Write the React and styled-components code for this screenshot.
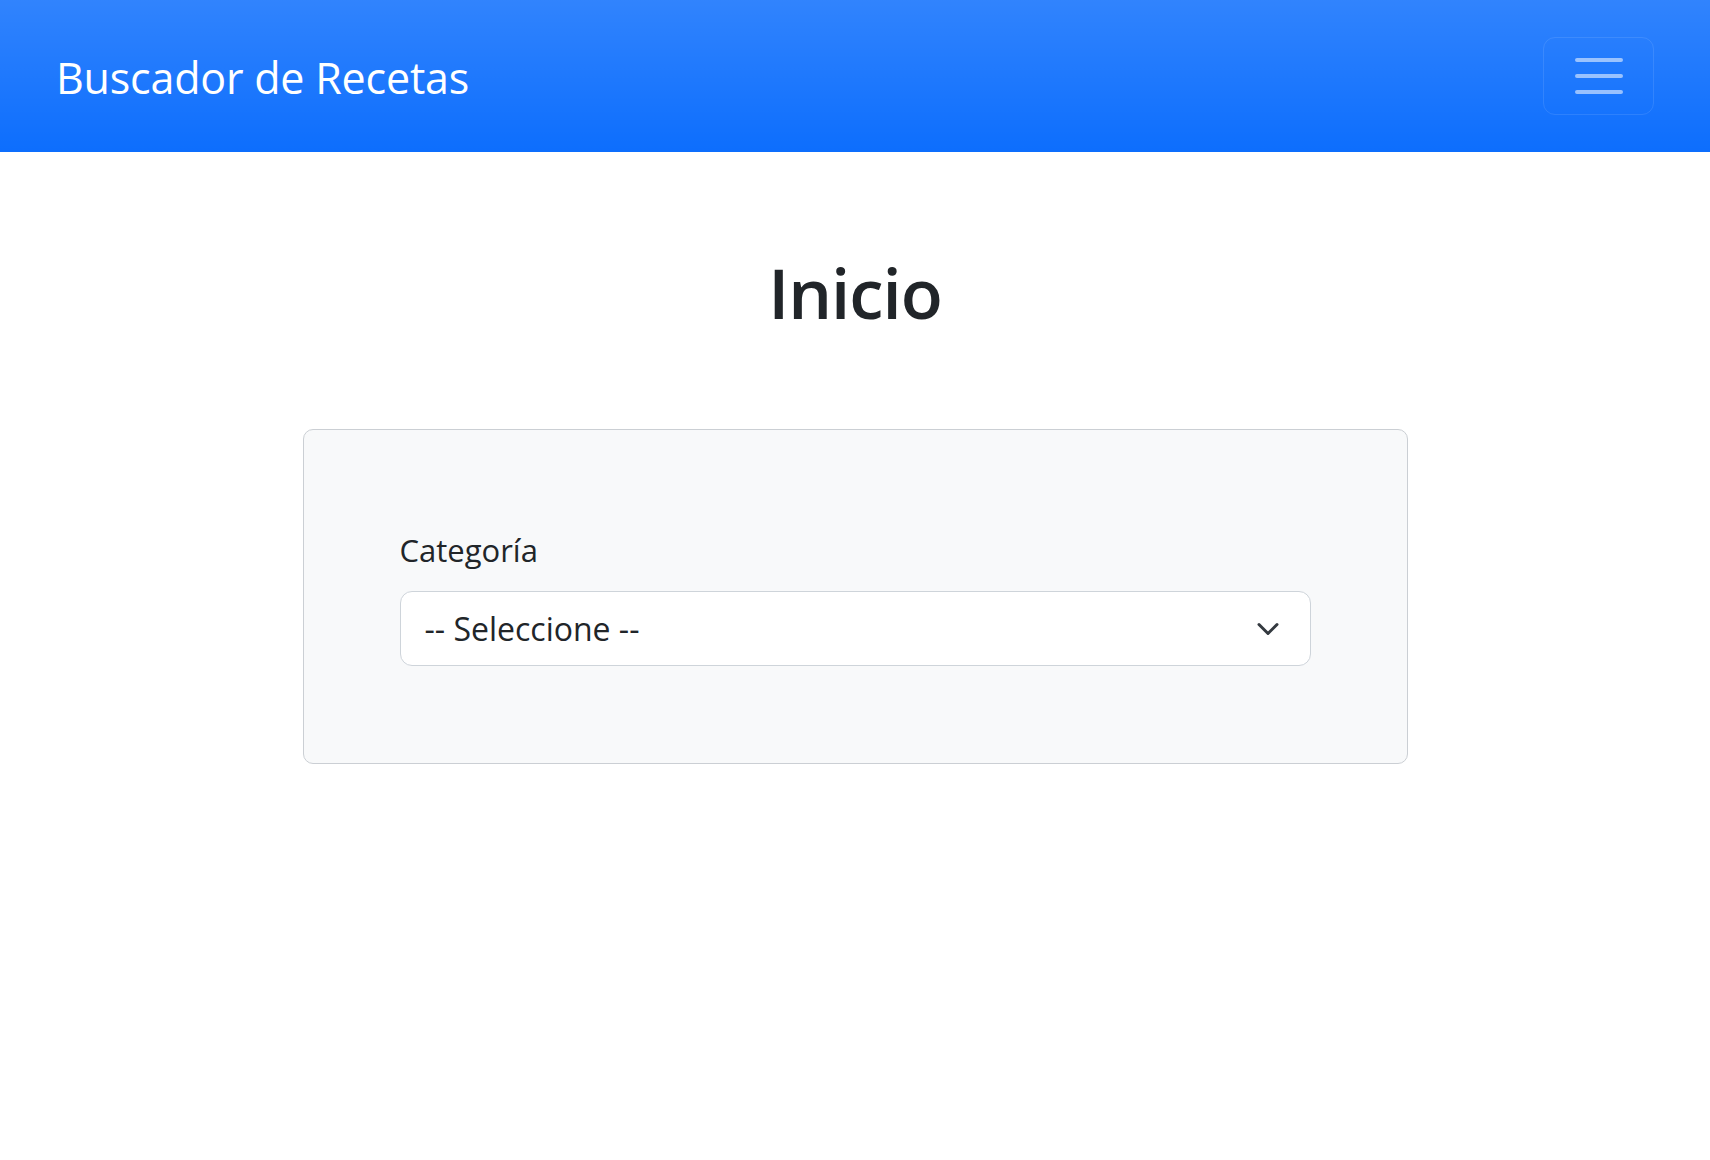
import React from 'react';
import styled, { createGlobalStyle } from 'styled-components';

const GlobalStyle = createGlobalStyle`
  body {
    margin: 0;
    background: #fff;
    color: #212529;
    font-family: "Open Sans", "Noto Sans", "Liberation Sans", sans-serif;
  }
  * { box-sizing: border-box; }
`;

// Navbar
const Navbar = styled.nav`
  height: 152px;
  padding: 0 56px;
  display: flex;
  align-items: center;
  justify-content: space-between;
  background-color: #0d6efd;
  background-image: linear-gradient(180deg, rgba(255, 255, 255, 0.15), rgba(255, 255, 255, 0));
`;

const Brand = styled.a`
  padding-top: 4px;
  color: #fff;
  font-size: 43px;
  line-height: 60px;
  text-decoration: none;
  letter-spacing: -0.2px;
`;

const Toggler = styled.button`
  width: 111px;
  height: 78px;
  padding: 8px 24px;
  display: flex;
  align-items: center;
  justify-content: center;
  background: transparent;
  border: 1px solid rgba(255, 255, 255, 0.1);
  border-radius: 12px;
  cursor: pointer;
`;

const TogglerIcon = () => (
  <svg width="60" height="60" viewBox="0 0 30 30">
    <path
      d="M4 7h22M4 15h22M4 23h22"
      stroke="rgba(255,255,255,0.55)"
      strokeWidth="2"
      strokeLinecap="round"
      strokeMiterlimit="10"
    />
  </svg>
);

// Main content
const Main = styled.main`
  display: flex;
  flex-direction: column;
  align-items: center;
  padding-top: 98px;
`;

const Heading = styled.h1`
  margin: 0 0 95px;
  font-size: 69px;
  font-weight: 600;
  line-height: 84px;
  letter-spacing: -1px;
`;

const Card = styled.div`
  width: 1105px;
  padding: 96px 96px 97px;
  background: #f8f9fa;
  border: 1px solid #cbcfd4;
  border-radius: 10px;
`;

const Label = styled.label`
  display: block;
  margin-bottom: 17px;
  font-size: 31px;
  line-height: 48px;
`;

const SelectWrap = styled.div`
  position: relative;
`;

const Select = styled.select`
  display: block;
  width: 100%;
  height: 75px;
  padding: 12px 72px 12px 24px;
  font-family: inherit;
  font-size: 32px;
  line-height: 48px;
  color: #212529;
  background: #fff;
  border: 1px solid #ced4da;
  border-radius: 12px;
  appearance: none;
  outline: none;
`;

const Chevron = styled.svg`
  position: absolute;
  right: 27px;
  top: 50%;
  transform: translateY(-50%);
  pointer-events: none;
`;

export default function App() {
  return (
    <>
      <GlobalStyle />
      <Navbar>
        <Brand href="#">Buscador de Recetas</Brand>
        <Toggler aria-label="Menú">
          <TogglerIcon />
        </Toggler>
      </Navbar>

      <Main>
        <Heading>Inicio</Heading>
        <Card>
          <Label htmlFor="categoria">Categoría</Label>
          <SelectWrap>
            <Select id="categoria" defaultValue="">
              <option value="">-- Seleccione --</option>
            </Select>
            <Chevron width="32" height="24" viewBox="0 0 16 16">
              <path
                d="m2 5 6 6 6-6"
                fill="none"
                stroke="#343a40"
                strokeWidth="2"
                strokeLinecap="round"
                strokeLinejoin="round"
              />
            </Chevron>
          </SelectWrap>
        </Card>
      </Main>
    </>
  );
}
